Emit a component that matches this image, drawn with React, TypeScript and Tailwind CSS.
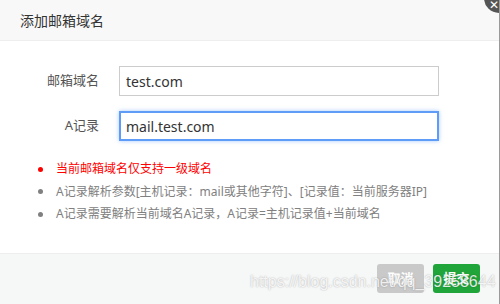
import React from "react";

export default function App() {
  const font = { fontFamily: '"Noto Sans", "Noto Sans CJK SC", sans-serif' };
  return (
    <div className="relative w-[500px] h-[304px] bg-white overflow-hidden border-r border-[#9a9a9a]" style={font}>
      <div className="h-[41px] bg-[#f8f8f8] border-b border-[#eeeeee] flex items-center pl-[20px] text-[14px] text-[#333]">
        添加邮箱域名
      </div>
      <div className="h-[212px] pt-[25px]">
        <div className="flex items-center h-[30px]">
          <div className="w-[99px] text-right text-[13px] text-[#555]">邮箱域名</div>
          <input
            readOnly
            value="test.com"
            className="ml-[20px] w-[320px] h-[30px] border border-[#cccccc] px-[6px] text-[14px] text-[#333] outline-none"
            style={font}
          />
        </div>
        <div className="flex items-center h-[30px] mt-[15px]">
          <div className="w-[99px] text-right text-[13px] text-[#555]">A记录</div>
          <input
            readOnly
            value="mail.test.com"
            className="ml-[20px] w-[320px] h-[30px] border-2 border-[#5e9cf7] px-[5px] text-[14px] text-[#333] outline-none shadow-[0_0_4px_rgba(80,150,250,0.5)]"
            style={font}
          />
        </div>
        <ul className="mt-[17px] pl-[38px] text-[12px] leading-[22.5px]">
          <li className="flex items-center text-[#ff0000]">
            <span className="w-[5px] h-[5px] rounded-full bg-[#ff0000] mr-[13px]" />
            当前邮箱域名仅支持一级域名
          </li>
          <li className="flex items-center text-[#808080]">
            <span className="w-[5px] h-[5px] rounded-full bg-[#808080] mr-[13px]" />
            A记录解析参数[主机记录：mail或其他字符]、[记录值：当前服务器IP]
          </li>
          <li className="flex items-center text-[#808080]">
            <span className="w-[5px] h-[5px] rounded-full bg-[#808080] mr-[13px]" />
            A记录需要解析当前域名A记录，A记录=主机记录值+当前域名
          </li>
        </ul>
      </div>
      <div className="h-[51px] bg-[#f6f7f7] border-t border-[#eeeeee] flex justify-end items-start pt-[10px] pr-[19px] gap-[9px]">
        <button className="w-[47px] h-[29px] rounded-[3px] bg-[#c9c9c9] text-white text-[13px] font-bold">取消</button>
        <button className="w-[47px] h-[29px] rounded-[3px] bg-[#20a53a] text-white text-[13px] font-bold">提交</button>
      </div>
      <div className="absolute right-[-15px] top-[-17px] w-[30px] h-[30px] rounded-full bg-[#555] flex items-center justify-center">
        <span className="text-white text-[12px] leading-none mt-[14px] mr-[10px]">✕</span>
      </div>
      <div
        className="absolute left-[250px] top-[274px] text-[16px] leading-none text-white/85 pointer-events-none"
        style={{ fontFamily: '"Liberation Sans", Arial, sans-serif', textShadow: "0 0 1.5px rgba(0,0,0,0.35)" }}
      >
        https://blog.csdn.net/qq_39258644
      </div>
    </div>
  );
}
